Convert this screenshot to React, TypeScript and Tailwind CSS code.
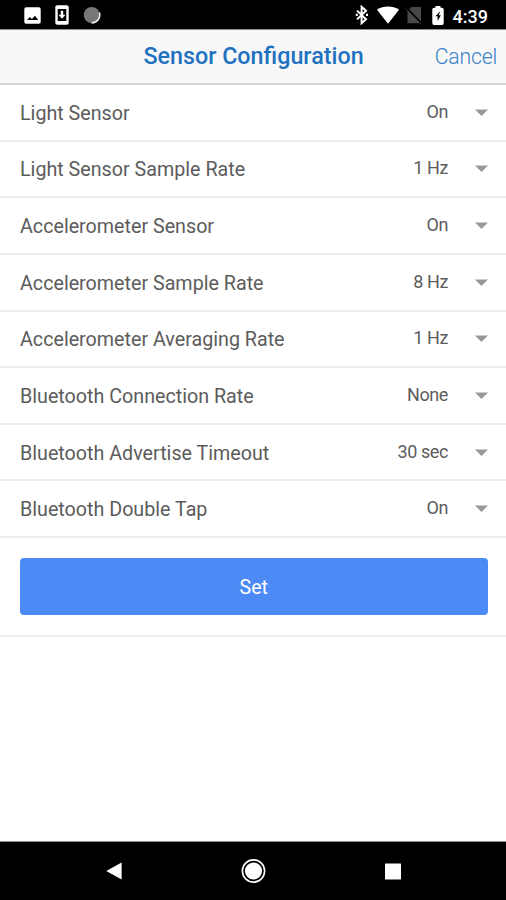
import { useState } from 'react';

type Setting = { id: string; label: string; value: string };

const SETTINGS: Setting[] = [
  { id: 'light', label: 'Light Sensor', value: 'On' },
  { id: 'light-rate', label: 'Light Sensor Sample Rate', value: '1 Hz' },
  { id: 'accel', label: 'Accelerometer Sensor', value: 'On' },
  { id: 'accel-rate', label: 'Accelerometer Sample Rate', value: '8 Hz' },
  { id: 'accel-avg', label: 'Accelerometer Averaging Rate', value: '1 Hz' },
  { id: 'bt-rate', label: 'Bluetooth Connection Rate', value: 'None' },
  { id: 'bt-timeout', label: 'Bluetooth Advertise Timeout', value: '30 sec' },
  { id: 'bt-tap', label: 'Bluetooth Double Tap', value: 'On' },
];

export default function App() {
  const [saved, setSaved] = useState(false);

  return (
    <div className="flex h-[900px] w-[506px] flex-col overflow-hidden bg-white font-['Roboto',sans-serif]">
      <StatusBar />
      <header className="grid h-[55px] shrink-0 grid-cols-[1fr_auto_1fr] items-center border-b-2 border-[#d6d6d6] bg-[#f8f8f8] pr-[9px]">
        <span />
        <h1 className="pt-px pl-[10px] text-[23.3px] leading-none font-medium text-[#2071c0]">
          Sensor Configuration
        </h1>
        <button
          type="button"
          className="justify-self-end text-[21.2px] leading-none font-light tracking-[-0.2px] text-[#3a80c9]"
        >
          Cancel
        </button>
      </header>
      <main className="min-h-0 flex-1">
        <ul>
          {SETTINGS.map((setting) => (
            <SettingRow key={setting.id} setting={setting} />
          ))}
        </ul>
        <div className="h-[99px] border-b-2 border-[#ececec] pt-5 pr-[18.5px] pl-5">
          <button
            type="button"
            disabled={saved}
            onClick={() => setSaved(true)}
            className="flex h-[57px] w-full items-center justify-center rounded-[4px] bg-[#4c8bf5] pt-px text-[19.5px] text-white"
          >
            Set
          </button>
        </div>
      </main>
      <NavBar />
    </div>
  );
}

function SettingRow({ setting }: { setting: Setting }) {
  return (
    <li className="flex h-[56.65px] items-center border-b-2 border-[#ececec] pr-[18px] pl-5 text-[#5c5c5c]">
      <span className="flex-1 pt-[2.5px] text-[19.7px] leading-none">{setting.label}</span>
      <span className="pr-[27px] pb-px text-[18px] leading-none tracking-[-0.4px]">
        {setting.value}
      </span>
      <svg width="13" height="7" viewBox="0 0 13 7" className="fill-[#999999]">
        <path d="M0 0.5h13L6.5 7z" />
      </svg>
    </li>
  );
}

function StatusBar() {
  return (
    <div className="flex h-[30px] shrink-0 items-center border-b border-[#8c8c8c] bg-black pr-[18px] pl-[24px] text-white">
      {/* picture */}
      <svg width="17" height="17" viewBox="0 0 17 17" className="mt-px mr-[14px]">
        <rect x="0.3" y="0.3" width="16.4" height="16.4" rx="1.8" fill="#fff" />
        <path d="M3 13 5.9 10l2 2.1L11 8.8l3.2 4.2z" fill="#000" />
      </svg>
      {/* download to phone */}
      <svg width="14" height="20" viewBox="0 0 14 20" className="mt-px mr-[14px]">
        <rect x="0.3" y="0.3" width="13.4" height="19.4" rx="2" fill="#fff" />
        <path d="M2.7 4h8.6v12H2.7z" fill="#000" />
        <path d="M5.8 5.8h2.4v4h2.3L7 13.8 3.5 9.8h2.3z" fill="#fff" />
      </svg>
      {/* sync spinner */}
      <svg width="18" height="18" viewBox="0 0 18 18">
        <circle cx="8.7" cy="9" r="8" fill="#777" />
        <path d="M16.4 6.5A8 8 0 0 1 8.5 16.9" fill="none" stroke="#eee" strokeWidth="1.5" />
      </svg>
      <span className="flex-1" />
      {/* bluetooth */}
      <svg width="14" height="20" viewBox="0 0 14 20" className="mt-px mr-[8px]">
        <path
          d="M2 5.6 11 14.2 6.6 18.2V1.8L11 5.8 2 14.4"
          fill="none"
          stroke="#fff"
          strokeWidth="2"
        />
        <path d="M.8 8.8h2v2.2h-2zM11 8.8h2v2.2h-2z" fill="#fff" />
      </svg>
      {/* wifi */}
      <svg width="22" height="18" viewBox="0 0 22 18" className="mt-px mr-[6px]">
        <path d="M0 3.8C6.2-.6 15.8-.6 22 3.8L11 17.7z" fill="#fff" />
      </svg>
      {/* no sim */}
      <svg width="18" height="19" viewBox="0 0 18 19" className="mt-px mr-[9px]">
        <path d="M6.5 1H16v16.2H2.5V5z" fill="#484848" />
        <path d="M.5 1 17 18" stroke="#000" strokeWidth="2" />
        <path d="M.5 2.5 16.5 18.5" stroke="#3c3c3c" strokeWidth="1" />
      </svg>
      {/* charging battery */}
      <svg width="12" height="19" viewBox="0 0 12 19" className="mt-px mr-[8.5px]">
        <path
          d="M3.5 0h5v1.8H10A1.7 1.7 0 0 1 11.7 3.5v13.8A1.7 1.7 0 0 1 10 19H2A1.7 1.7 0 0 1 .3 17.3V3.5A1.7 1.7 0 0 1 2 1.8h1.5z"
          fill="#fff"
        />
        <path d="M8.4 5 3.4 10.2h2.2V15l3.3-5.8H6.7z" fill="#000" />
      </svg>
      <span className="pt-[4px] text-[18px] leading-none font-medium">4:39</span>
    </div>
  );
}

function NavBar() {
  return (
    <nav className="flex h-[59px] shrink-0 items-center justify-between border-t border-[#8c8c8c] bg-black pr-[105px] pl-[105.5px]">
      <svg width="16" height="18" viewBox="0 0 16 18">
        <path d="M15.6.5v17L.3 9z" fill="#fff" />
      </svg>
      <svg width="25" height="25" viewBox="0 0 25 25">
        <circle cx="12.5" cy="12" r="11.1" fill="none" stroke="#fff" strokeWidth="1.6" />
        <circle cx="12.5" cy="12" r="8.6" fill="#fff" />
      </svg>
      <svg width="16" height="17" viewBox="0 0 16 17">
        <rect y="0.5" width="16" height="16" rx="0.5" fill="#fff" />
      </svg>
    </nav>
  );
}
